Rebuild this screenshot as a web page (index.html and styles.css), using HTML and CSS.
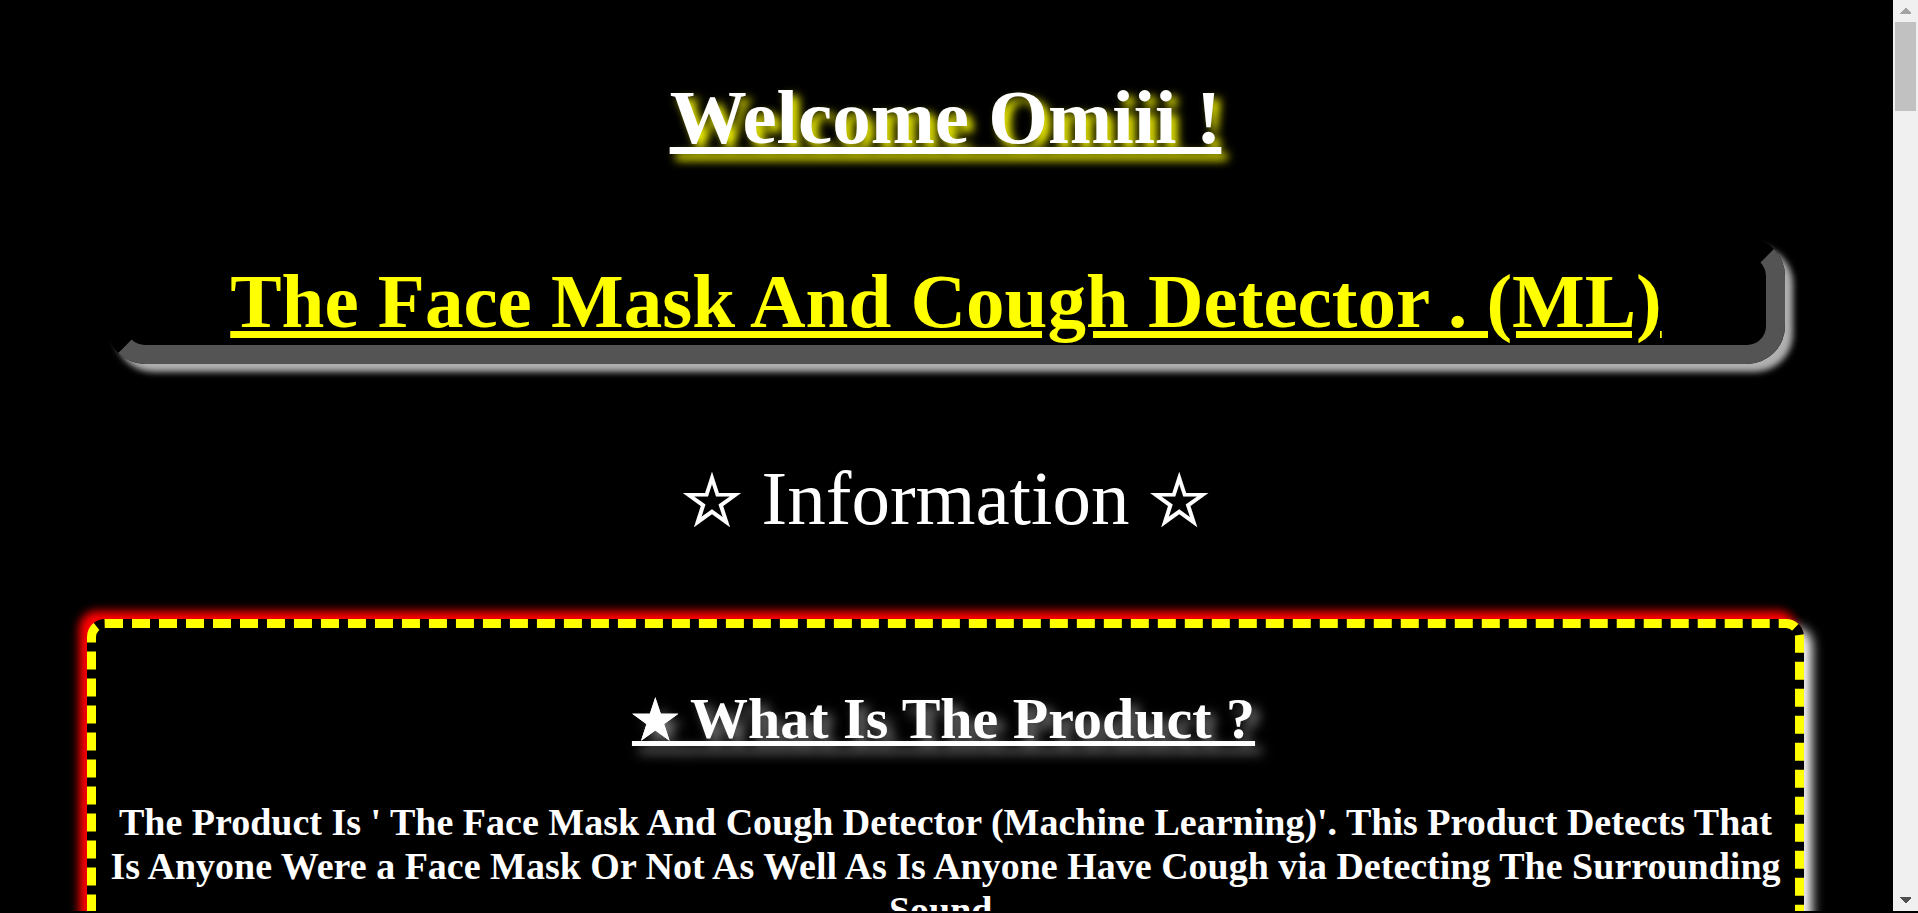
FILE: index.html
```html
<!DOCTYPE html>
<html lang="en">
<head>
<meta charset="utf-8">
<title>The Face Mask And Cough Detector</title>
<link rel="stylesheet" href="styles.css">
</head>
<body>
<div class="shell">
  <main class="page">
    <h1 class="welcome">Welcome Omiii !</h1>
    <h1 class="title">The Face Mask And Cough Detector . (ML)</h1>
    <p class="section-label"><span class="star">☆</span> Information <span class="star">☆</span></p>
    <section class="card">
      <h2 class="card-title"><span class="star-solid">★</span> What Is The Product ?</h2>
      <p class="card-text">The Product Is ' The Face Mask And Cough Detector (Machine Learning)'. This Product Detects That Is Anyone Were a Face Mask Or Not As Well As Is Anyone Have Cough via Detecting The Surrounding Sound.</p>
    </section>
  </main>
  <div class="scrollbar">
    <button class="scroll-button" type="button" aria-label="Scroll up"><svg width="11" height="6" viewBox="0 0 11 6" shape-rendering="crispEdges"><path fill="#a3a3a3" d="M0 6V5L5 0H6L11 5V6Z"/></svg></button>
    <div class="scroll-track"><div class="scroll-thumb"></div></div>
    <button class="scroll-button" type="button" aria-label="Scroll down"><svg width="11" height="6" viewBox="0 0 11 6" shape-rendering="crispEdges"><path fill="#505050" d="M0 0V1L5 6H6L11 1V0Z"/></svg></button>
  </div>
</div>
</body>
</html>
```
FILE: styles.css
```css
* {
  box-sizing: border-box;
}

body {
  margin: 0;
  background: #000;
  color: #fff;
  font-family: "Liberation Serif", "Times New Roman", "DejaVu Sans", serif;
}

.shell {
  display: flex;
  height: 100vh;
  border-bottom: 2px solid #000;
}

.page {
  flex: 1;
  min-width: 0;
  padding: 73px 89px 0 87px;
  overflow: auto;
  scrollbar-width: none;
  text-align: center;
}

.welcome,
.title,
.section-label {
  margin: 0;
  font-size: 77px;
  line-height: 88px;
}

.welcome {
  margin-bottom: 77px;
  text-decoration: underline;
  text-shadow: 6px 6px 10px yellow;
}

.title {
  margin: 0 19px 90px 20px;
  border: 19px solid;
  border-color: #000 #545454 #545454 #000;
  border-radius: 38px;
  box-shadow: 8px 8px 6px #b0b0b0;
  color: yellow;
  text-decoration: underline;
}

.section-label {
  margin-bottom: 77px;
}

.star {
  font-size: 68px;
  line-height: 1;
  -webkit-text-stroke: 2px #fff;
}

.card {
  min-height: 1200px;
  padding: 58px 8px;
  border: 9px dashed yellow;
  border-radius: 18px;
  background: #000;
  box-shadow: -8px -8px 10px red, 8px 8px 12px white;
}

.card-title {
  margin: 0 0 48px;
  font-size: 58px;
  line-height: 66px;
  text-decoration: underline;
  text-shadow: 7px 7px 12px gray;
}

.star-solid {
  margin: 0 -2px 0 -4px;
  font-size: 52px;
  line-height: 1;
  -webkit-text-stroke: 2px #fff;
}

.card-text {
  margin: 0;
  font-size: 38px;
  font-weight: bold;
  line-height: 44px;
}

.scrollbar {
  display: flex;
  flex-direction: column;
  width: 25px;
  background: #f0f0f0;
}

.scroll-button {
  display: flex;
  align-items: center;
  justify-content: center;
  height: 22px;
  padding: 0;
  border: 0;
  background: none;
}

.scroll-track {
  flex: 1;
  padding: 0 2px;
}

.scroll-thumb {
  height: 89px;
  background: #c1c1c1;
}
```
